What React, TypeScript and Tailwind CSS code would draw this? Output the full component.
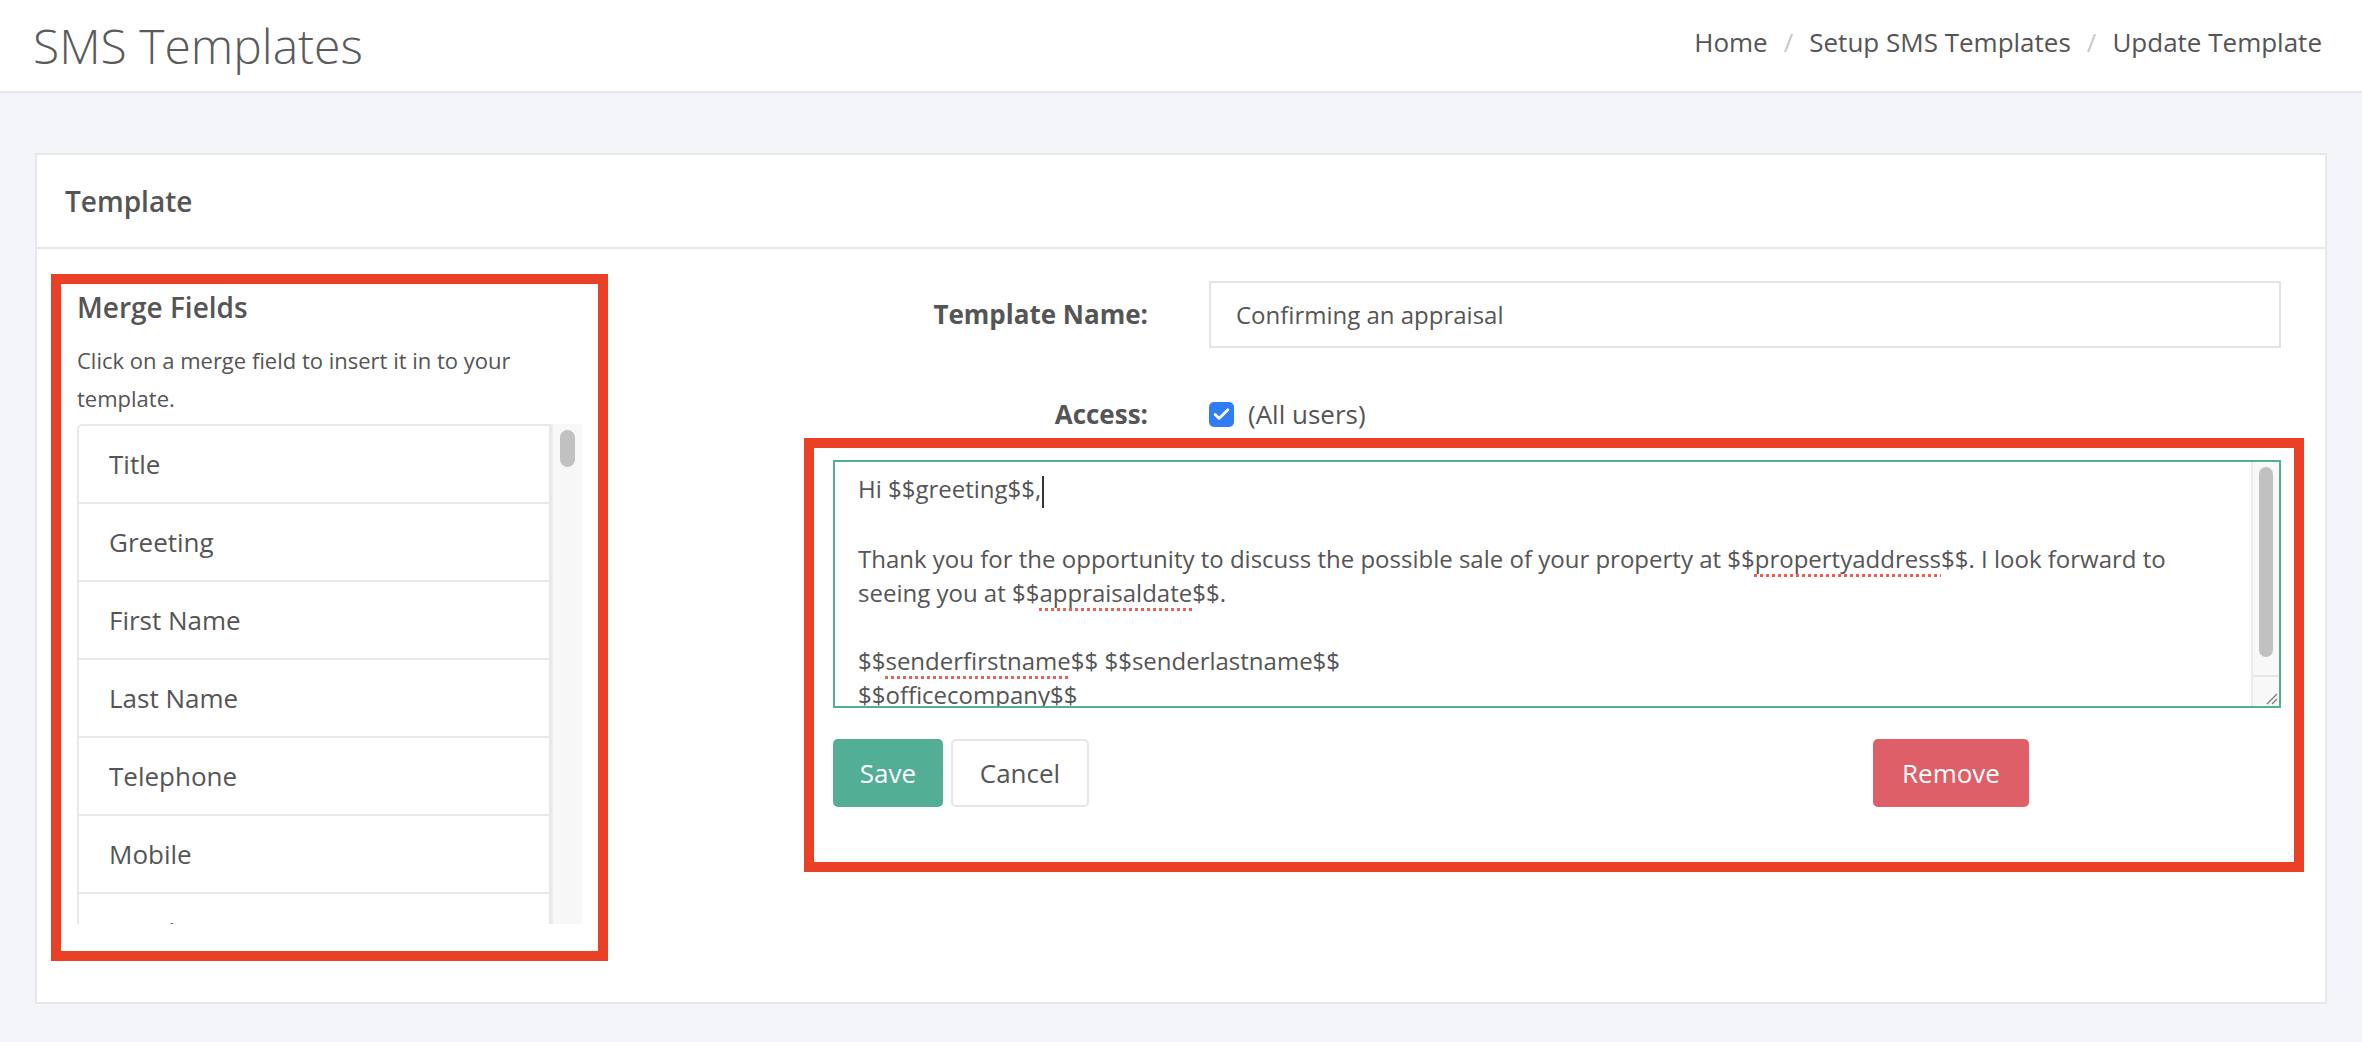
import { Check } from "lucide-react";

const mergeFields = ["Title", "Greeting", "First Name", "Last Name", "Telephone", "Mobile", "Email"];

function Spell({ children }: { children: string }) {
  return (
    <span className="underline decoration-dotted decoration-[#ec5f58] decoration-[3px] underline-offset-[6px]">
      {children}
    </span>
  );
}

function MergeFieldList() {
  return (
    <div className="flex h-[500px] overflow-hidden">
      <div className="w-[474px] overflow-hidden rounded-tl-[5px] border-2 border-b-0 border-[#e8e8e8]">
        {mergeFields.map((f) => (
          <div
            key={f}
            className="flex h-[78px] shrink-0 items-center border-b-2 border-[#e8e8e8] pl-[30px] text-[26px] text-[#555]"
          >
            {f}
          </div>
        ))}
      </div>
      <div className="w-[31px] border-l-2 border-[#ececec] bg-[#f7f7f7] pt-[6px]">
        <div className="mx-auto h-[37px] w-[15px] rounded-full bg-[#c1c1c1]" />
      </div>
    </div>
  );
}

function TemplateText() {
  return (
    <div className="flex h-[248px] border-2 border-[#52ae95] bg-white">
      <div className="flex-1 overflow-hidden pl-[23px] pt-[10px] text-[24px] leading-[34px] text-[#555]">
        <div>
          Hi $$greeting$$,
          <span className="ml-[1px] inline-block h-[32px] w-[2px] bg-[#333] align-middle" />
        </div>
        <div>&nbsp;</div>
        <div>
          Thank you for the opportunity to discuss the possible sale of your property at $$<Spell>propertyaddress</Spell>$$. I look forward to
        </div>
        <div>
          seeing you at $$<Spell>appraisaldate</Spell>$$.
        </div>
        <div>&nbsp;</div>
        <div>
          $$<Spell>senderfirstname</Spell>$$ $$senderlastname$$
        </div>
        <div>
          $$<Spell>officecompany</Spell>$$
        </div>
      </div>
      <div className="flex w-[28px] flex-col border-l-2 border-[#ececec] bg-[#f8f8f8]">
        <div className="flex-1 pt-[5px]">
          <div className="mx-auto h-[190px] w-[14px] rounded-full bg-[#c1c1c1]" />
        </div>
        <div className="relative h-[31px] border-t-2 border-[#e6e6e6]">
          <svg className="absolute bottom-[1px] right-[1px]" width="14" height="14" viewBox="0 0 14 14">
            <path d="M13 3 L3 13 M13 8 L8 13" stroke="#777" strokeWidth="1.2" />
          </svg>
        </div>
      </div>
    </div>
  );
}

export default function App() {
  return (
    <div className="min-h-[1042px] bg-[#f4f5f9] font-['Open_Sans',sans-serif] text-[#555]">
      <header className="flex h-[93px] items-center justify-between border-b-2 border-[#e7e8ec] bg-white pl-[33px] pr-[40px]">
        <h1 className="text-[48px] font-light leading-none text-[#5b5b5b]">SMS Templates</h1>
        <nav className="flex items-center pb-[6px] text-[26px] text-[#555]">
          <span>Home</span>
          <span className="px-[16px] text-[#c8c8c8]">/</span>
          <span>Setup SMS Templates</span>
          <span className="px-[16px] text-[#c8c8c8]">/</span>
          <span>Update Template</span>
        </nav>
      </header>

      <main className="px-[35px] pt-[60px]">
        <section className="h-[851px] border-2 border-[#e7e8ec] bg-white">
          <div className="flex h-[94px] items-center border-b-2 border-[#e7e8ec] pl-[28px]">
            <h2 className="text-[28px] font-semibold text-[#555]">Template</h2>
          </div>

          <div className="flex pl-[14px] pt-[25px]">
            <div className="w-[557px] border-[10px] border-[#ea4025] px-[16px] pt-[3px] pb-[27px]">
              <h3 className="text-[28px] font-semibold leading-[40px] text-[#555]">Merge Fields</h3>
              <p className="mt-[15px] text-[22px] leading-[37.5px] text-[#555]">
                Click on a merge field to insert it in to your template.
              </p>
              <div className="mt-[7px]">
                <MergeFieldList />
              </div>
            </div>

            <div className="flex-1">
              <div className="mt-[7px] flex h-[67px] items-center">
                <label className="w-[540px] text-right text-[26px] font-bold text-[#555]">Template Name:</label>
                <div className="ml-[61px] flex h-full w-[1072px] items-center border-2 border-[#e3e3e3] pl-[25px] text-[24px] text-[#555]">
                  Confirming an appraisal
                </div>
              </div>

              <div className="mt-[46px] flex h-[40px] items-center">
                <label className="w-[540px] text-right text-[26px] font-bold text-[#555]">Access:</label>
                <div className="ml-[61px] flex items-center gap-[14px]">
                  <div className="flex h-[25px] w-[25px] items-center justify-center rounded-[5px] bg-[#2f7cf6]">
                    <Check className="h-[19px] w-[19px] text-white" strokeWidth={3.5} />
                  </div>
                  <span className="text-[26px] text-[#555]">(All users)</span>
                </div>
              </div>

              <div className="ml-[196px] mt-[4px] w-[1500px] border-[10px] border-[#ea4025] pb-[55px] pl-[19px] pr-[13px] pt-[12px]">
                <TemplateText />
                <div className="mt-[31px] flex items-center">
                  <button className="h-[68px] w-[110px] rounded-[5px] bg-[#52ae95] text-[26px] text-white">Save</button>
                  <button className="ml-[8px] h-[68px] w-[138px] rounded-[5px] border-2 border-[#e6e6e6] bg-white text-[26px] text-[#555]">
                    Cancel
                  </button>
                  <button className="ml-[784px] h-[68px] w-[156px] rounded-[5px] bg-[#de5f68] text-[26px] text-white">
                    Remove
                  </button>
                </div>
              </div>
            </div>
          </div>
        </section>
      </main>
    </div>
  );
}
